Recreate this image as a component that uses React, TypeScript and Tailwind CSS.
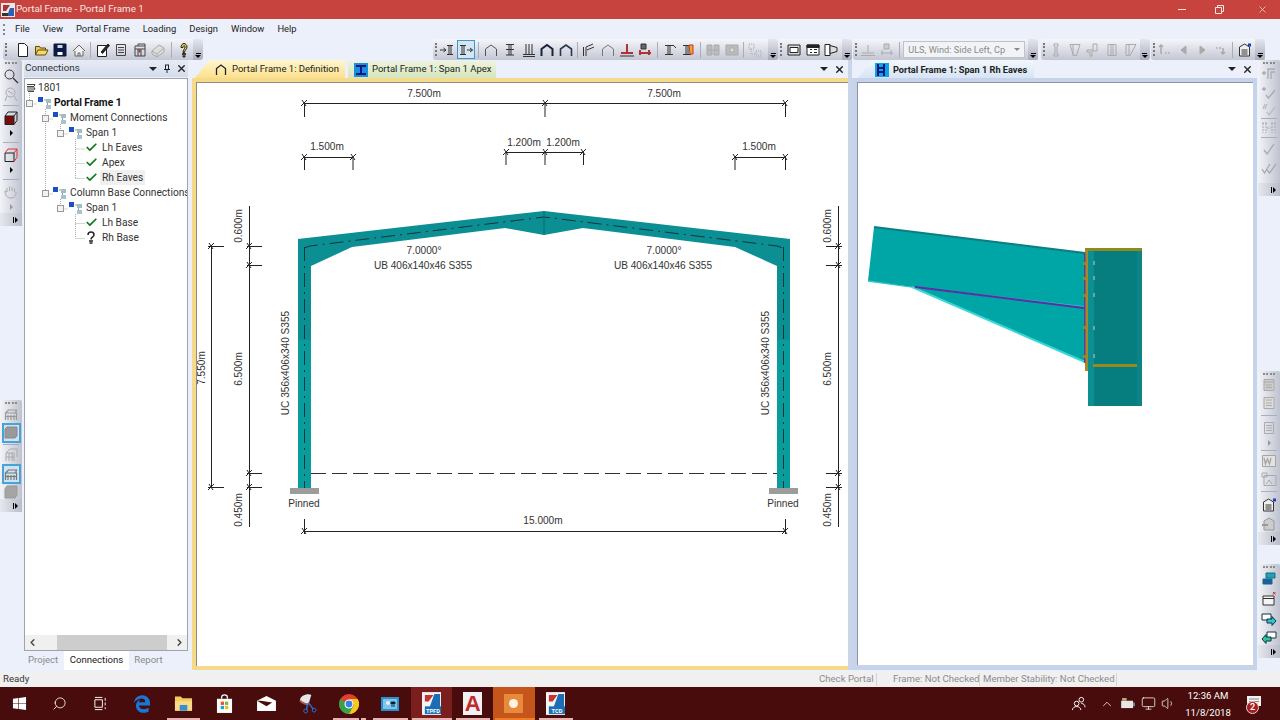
import React from 'react';
import { Check, ChevronLeft, ChevronRight, ChevronUp, Monitor, Search, Volume1, X } from 'lucide-react';
import { FaWindows, FaEdgeLegacy } from 'react-icons/fa';

const I = ({ children, className = 'text-[#333]' }: { children: React.ReactNode; className?: string }) => (
  <svg viewBox="0 0 16 16" fill="none" stroke="currentColor" className={`w-4 h-4 shrink-0 ${className}`}>
    {children}
  </svg>
);

const Grip = () => (
  <div className="w-[2px] h-[13px] shrink-0 border-l-2 border-dotted border-[#777]" />
);
const Sep = ({ className = 'mx-[2px]' }: { className?: string }) => (
  <div className={`w-px h-[16px] bg-[#a9adb9] shrink-0 ${className}`} />
);
const Cell = ({ children, on = false }: { children: React.ReactNode; on?: boolean }) => (
  <div className={`w-[18.6px] h-[19px] shrink-0 flex items-center justify-center ${on ? 'border border-[#3c97cf] bg-[#d5e6f3]' : ''}`}>
    {children}
  </div>
);
const EndCap = () => (
  <div className="w-[10px] h-full ml-auto shrink-0 rounded-r-[3px] bg-gradient-to-b from-[#e4e6ee] to-[#a9adba] flex flex-col items-center justify-end pb-[2px]">
    <div className="w-[5px] h-px bg-black mb-px" />
    <div className="w-0 h-0 border-x-[3px] border-x-transparent border-t-[3px] border-t-black" />
  </div>
);
const Bar = ({ children, className }: { children: React.ReactNode; className: string }) => (
  <div className={`h-[21px] flex items-center shrink-0 pl-[2px] rounded-l-[3px] bg-gradient-to-b from-[#f5f6fb] to-[#c3c7d3] ${className}`}>
    <Grip />
    {children}
    <EndCap />
  </div>
);

const VCell = ({ children, on = false, className = 'h-[19px]' }: { children: React.ReactNode; on?: boolean; className?: string }) => (
  <div className={`w-[19px] shrink-0 flex items-center justify-center ${className} ${on ? 'border-2 border-[#4aa3d8] bg-[#cfe2f0]' : ''}`}>
    {children}
  </div>
);
const VSep = ({ className = 'my-[3px]' }: { className?: string }) => <div className={`w-[16px] h-px shrink-0 bg-[#aaaeba] ${className}`} />;
const VArrow = ({ grey = false }: { grey?: boolean }) => (
  <div className="h-[12px] shrink-0 flex items-center">
    <div className={`w-0 h-0 border-y-[3px] border-y-transparent border-l-[3px] ${grey ? 'border-l-[#999]' : 'border-l-black'}`} />
  </div>
);
const VGrip = () => <div className="w-[12px] h-[3px] mt-[2px] border-t-2 border-dotted border-[#8a8a8a] shrink-0" />;
const VEnd = () => (
  <div className="mt-auto w-full h-[13px] shrink-0 flex items-center justify-end pr-[4px] gap-px bg-gradient-to-r from-[#e6e8ef] to-[#b9bdc9]">
    <div className="w-px h-[6px] bg-black" />
    <div className="w-0 h-0 border-y-[3px] border-y-transparent border-l-[3px] border-l-black" />
  </div>
);
const VBar = ({ children, className }: { children: React.ReactNode; className: string }) => (
  <div className={`w-[22px] flex flex-col items-center shrink-0 rounded-[2px] bg-gradient-to-r from-[#f3f4f9] to-[#bfc3cf] ${className}`}>
    <VGrip />
    {children}
    <VEnd />
  </div>
);

const Arch = ({ w = 1 }: { w?: number }) => <path d="M2.5 14V7l5.5-4 5.5 4v7" strokeWidth={w} />;
const IBeam = () => <path d="M4 3.5h8M4 12.5h8M7 3.5v9M9 3.5v9" />;
const Page = () => <path d="M3.5 1.5h6l3 3v10h-9z" fill="#fff" />;
const Cube = ({ fill, stroke }: { fill: string; stroke: string }) => (
  <>
    <path d="M2 6h9v8.5H2z" fill={fill} stroke="#222" />
    <path d="M2 6l3-4h9v8.5l-3 4M11 6l3-4" stroke={stroke} />
  </>
);
const Lines = () => <path d="M3.5 2.5h9v11h-9zM5 5.5h6M5 8h6M5 10.5h6" />;
const Frame3D = () => (
  <path d="M2.5 14V7h11v7M2.5 7l3-3h8l-1 3M5 14V9M8 14V9M11 14V9M2.5 10.5h11" strokeWidth={1.2} />
);

const TopToolbars = () => (
  <div className="h-[21px] flex shrink-0 pl-[3px]">
    <Bar className="w-[195px]">
      <div className="w-[7px] shrink-0" />
      <Cell><I className="text-[#222]"><Page /></I></Cell>
      <Cell><I className="text-[#5a4a10]"><path d="M1.5 13V4.5h4l1 1.5h5v2" fill="#f0c850" /><path d="M1.5 13l2.5-5h10l-2.5 5z" fill="#f5d870" /></I></Cell>
      <Cell><I className="text-[#0b1a3f]"><path d="M2 2h12v12H2z" fill="#0d1b4a" /><path d="M5 2.5h6v4H5z" fill="#cfd4e0" /><path d="M5 9.5h6v4H5z" fill="#fff" /></I></Cell>
      <Cell><I className="text-[#666]"><path d="M2 9l6-6 6 6M4 9v5h8V9" fill="#f0f0f0" /><path d="M7 14v-3h2v3" /></I></Cell>
      <Sep className="mx-[2px]" />
      <Cell><I className="text-[#222]"><path d="M2.5 3.5h9v11h-9z" fill="#fff" /><path d="M6 10l7-8 1.5 1.5-7 8z" fill="#222" /></I></Cell>
      <Cell><I className="text-[#444]"><Lines /></I></Cell>
      <Cell><I className="text-[#444]"><path d="M3 4h10v10H3zM6 4V2h7v2M3 7h10M6 7v7M9 7v7" /><path d="M6.5 7.5h2v3h-2z" fill="#a33" stroke="none" /></I></Cell>
      <Cell><I className="text-[#aaa]"><path d="M2 9l7-6 5 3v4l-7 5-5-3z" fill="#ddd" /><path d="M2 9l5 3 7-6M7 12v3" /></I></Cell>
      <Sep className="mx-[3px]" />
      <Cell><I className="text-[#222]"><path d="M5 5.5C5 3 6.5 1.5 8 1.5s3 1.5 3 3.5c0 2.5-2.5 3-2.5 5.5H7C7 8 9 7 9 5S7 3.5 7 5.5z" fill="#f2d13c" /><path d="M6.5 11.5h3v1.500h-3zM7 14h2v1H7z" fill="#888" /></I></Cell>
    </Bar>
    <div className="w-[235px] shrink-0" />
    <Bar className="w-[345px]">
      <div className="w-px shrink-0" />
      <Cell><I><path d="M1 8h6M4.500 6l2.500 2-2.500 2" /><path d="M8 3.500h6M8 12.500h6M10 3.500v9M12 3.500v9" /></I></Cell>
      <Cell on><I><path d="M2 3.500h6M2 12.500h6M4 3.500v9M6 3.500v9" /><path d="M9 8h5.500M12 6l2.500 2-2.500 2" /></I></Cell>
      <Sep className="mx-[3px]" />
      <Cell><I className="text-[#555]"><Arch /></I></Cell>
      <Cell><I><path d="M4 2.500h8M4 7.500h8M4 13h8M7 2.500v10.500M9 2.500v10.500" /></I></Cell>
      <Cell><I><path d="M5 2v10M8 2v10M11 2v10M2 12.500h12M2 14.500h12" /></I></Cell>
      <Cell><I className="text-[#1b2238]"><Arch w={2} /></I></Cell>
      <Cell><I className="text-[#2c3550]"><Arch w={1.600} /></I></Cell>
      <Sep className="mx-[2px]" />
      <Cell><I><path d="M2.500 14V5M5 14V5M5 5l7-3M6 8l7-3" /></I></Cell>
      <Cell><I className="text-[#777]"><Arch /></I></Cell>
      <Cell><I className="text-[#b23131]"><path d="M8 2v8M2 11h12" strokeWidth={2} /><path d="M1 14h14" stroke="#333" /></I></Cell>
      <Cell><I className="text-[#333]"><path d="M4 2h5v5H4z" fill="#666" /><path d="M3 8v5M12 8v5M2 11h12" stroke="#b23131" strokeWidth={2} /></I></Cell>
      <Sep className="mx-[2px]" />
      <Cell><I><IBeam /><path d="M12 3l3 3" /></I></Cell>
      <Cell><I><IBeam /><path d="M10 3h4v9h-3z" fill="#e0b020" stroke="#c33" /></I></Cell>
      <Sep className="mx-[3px]" />
      <Cell><I className="text-[#aaa]"><path d="M2 3h5v10H2zM9 3h5v10H9zM2 8h12" fill="#bbb" /></I></Cell>
      <Cell><I className="text-[#aaa]"><path d="M2 3h12v10H2z" fill="#bbb" /><path d="M6 6h4v4H6z" fill="#ddd" /></I></Cell>
      <Sep className="mx-[2px]" />
      <Cell><I className="text-[#aaa]"><path d="M2 2h5v5H2zM9 9h5v5H9zM4 7v5h5" strokeDasharray="1 1" /></I></Cell>
    </Bar>
    <Bar className="w-[74px]">
      <div className="w-[3px] shrink-0" />
      <Cell><I className="text-[#222]"><path d="M2 3h12v10H2z" fill="#ddd" /><path d="M4 5.500h8v5H4z" fill="#fff" /></I></Cell>
      <Cell><I className="text-[#222]"><path d="M2 3h12v10H2z" fill="#fff" /><path d="M2 3h12v2.500H2z" fill="#222" /><path d="M5 7.500h2M9 7.500h3M5 10.500h2M9 10.500h3" /></I></Cell>
      <Cell><I className="text-[#222]"><path d="M2 2.500h5v11H2z" fill="#fff" /><path d="M7 3.500l7 2v4l-7 2z" fill="#ddd" /></I></Cell>
    </Bar>
    <Bar className="w-[185px] ml-px">
      <div className="w-[2px] shrink-0" />
      <Cell><I className="text-[#aaa]"><path d="M8 3v7M2 11h12" /><path d="M1 13.500h14" /></I></Cell>
      <Cell><I className="text-[#aaa]"><path d="M5 2h5v5H5z" fill="#ccc" /><path d="M3 8v5M12 8v5M2 11h12" /></I></Cell>
      <Sep className="mx-[3px]" />
      <div className="w-[122px] h-[17px] shrink-0 bg-[#f2f3f7] border border-[#bfc2cc] flex items-center pl-[4px] text-[#8a8a8a] text-[9.200px] whitespace-nowrap overflow-hidden">
        ULS, Wind: Side Left, Cp
        <div className="ml-auto mr-[4px] w-0 h-0 border-x-[3px] border-x-transparent border-t-[3px] border-t-[#888]" />
      </div>
    </Bar>
    <Bar className="w-[108px] ml-[3px]">
      <div className="w-[2px] shrink-0" />
      <Cell><I className="text-[#aaa]"><path d="M6 2h4v2H9v8h1v2H6v-2h1V4H6z" /></I></Cell>
      <Cell><I className="text-[#aaa]"><path d="M3 2.500h10L9.500 13.500h-3z" /><path d="M6 2.500v11" /></I></Cell>
      <Cell><I className="text-[#aaa]"><path d="M2 8h5v6H5V10H2zM8 2h4v7H8z" /></I></Cell>
      <Cell><I className="text-[#aaa]"><path d="M4 2.500h8v11H4zM7 2.500v11M9 2.500v11" /></I></Cell>
      <Cell><I className="text-[#aaa]"><path d="M3 2.500h10l-6 11H3zM6 2.500v11" /></I></Cell>
    </Bar>
    <Bar className="w-[114px] ml-[2px]">
      <div className="w-px shrink-0" />
      <Cell><I className="text-[#aaa]"><path d="M4 3v9M2 5l2-2 2 2M8 11h1.500M11 11h1.500" strokeWidth={1.500} /></I></Cell>
      <Cell><I className="text-[#aaa]"><path d="M10 4L5 8l5 4z" fill="#aaa" /></I></Cell>
      <Cell><I className="text-[#aaa]"><path d="M6 4l5 4-5 4z" fill="#aaa" /></I></Cell>
      <Cell><I className="text-[#aaa]"><path d="M3 6h1.500M6 6h2M10 6v6M8 10l2 2 2-2" strokeWidth={1.500} /></I></Cell>
      <Sep className="mx-[2px]" />
      <Cell><I className="text-[#333]"><path d="M2.500 5l5-3 5 3v9h-10z" fill="#eee" /><path d="M4.500 8h6M4.500 10h6M4.500 12h6" /><path d="M11 1.500h3v3h-3z" fill="#1b3fb5" stroke="none" /></I></Cell>
    </Bar>
  </div>
);

const LeftTools = () => (
  <div className="w-[22px] flex flex-col shrink-0">
    <VBar className="h-[158px]">
      <VCell className="h-[18px] mt-[2px]"><I className="text-[#333]"><circle cx="6.500" cy="6.500" r="4.500" /><path d="M10 10l5 5" strokeWidth={1.300} /></I></VCell>
      <VCell className="h-[17px]"><I className="text-[#aaa]"><circle cx="7.500" cy="6.500" r="4.500" /><path d="M4 10l-2 5M11 10l3 5M5 5l5 3" /></I></VCell>
      <VSep />
      <VCell className="h-[18px]"><I className="text-[#222]"><Cube fill="#7a0c0c" stroke="#222" /></I></VCell>
      <VArrow />
      <VSep />
      <VCell className="h-[18px]"><I className="text-[#222]"><Cube fill="none" stroke="#d33" /></I></VCell>
      <VArrow />
      <VSep />
      <VCell className="h-[18px]"><I className="text-[#aaa]"><path d="M4 8V4M6.500 7V2.500M9 7V3M11.500 8V4.500M4 8L2 7c0 4 2 7 6 7 3 0 5-2 5-6" /></I></VCell>
      <VArrow grey />
    </VBar>
    <VBar className="h-[112px] mt-[182px]">
      <VCell className="h-[17px]"><I className="text-[#999]"><Frame3D /></I></VCell>
      <VCell on className="h-[20px] mt-px"><I className="text-[#8a8a8a]"><path d="M2 4l2-2h10v9l-2 2H2z" fill="#999" /></I></VCell>
      <VSep className="my-px" />
      <VCell className="h-[18px]"><I className="text-[#aaa]"><path d="M3 14V6l4-4h7v8M3 6h8v8M6 14V6M9 14V6M3 10h8" /></I></VCell>
      <VCell on className="h-[20px]"><I className="text-[#777]"><Frame3D /></I></VCell>
      <VCell className="h-[15px]"><I className="text-[#999]"><path d="M2 5l2-3h10v9l-2 3H2z" fill="#a5a5a5" /></I></VCell>
    </VBar>
  </div>
);

const RightTools = () => (
  <div className="w-[22px] flex flex-col shrink-0 ml-px">
    <VBar className="h-[136px]">
      <VCell className="h-[18px]"><I className="text-[#aaa]"><path d="M1 7h4M3 5v4M7 13V3h7M10 13V6h4" strokeWidth={1.300} /></I></VCell>
      <VCell className="h-[18px]"><I className="text-[#aaa]"><path d="M1 5h4M3 3v4M5 11l2.500 3L14 6" strokeWidth={1.300} /></I></VCell>
      <VCell className="h-[16px]"><I className="text-[#bbb]"><path d="M4 3l-2 5M6 3L4 8M6 11l2 3 6-8" strokeWidth={1.300} /></I></VCell>
      <VSep className="my-px" />
      <VCell className="h-[16px]"><I className="text-[#aaa]"><path d="M1 3h5M2 3v10M5 3v10M10 3h5M11 3v10M14 3v10M6 8h4" strokeDasharray="2 1" /></I></VCell>
      <VSep className="my-px" />
      <VCell className="h-[19px]"><I className="text-[#aaa]"><path d="M3 9l3 4 7-10" strokeWidth={1.300} /></I></VCell>
      <VCell className="h-[20px]"><I className="text-[#aaa]"><path d="M1 9l2.500 4L9 4M6 10l2.500 3L15 4" strokeWidth={1.300} /></I></VCell>
    </VBar>
    <VBar className="h-[174px] mt-[175px]">
      <VCell className="h-[18px]"><I className="text-[#aaa]"><path d="M3 2.500h10v11H3z" fill="#ccc" /><path d="M3 5h10M5 8h6M5 10.500h6" /></I></VCell>
      <VCell className="h-[18px]"><I className="text-[#aaa]"><path d="M3 2.500h10v11H3zM5 5h6M5 8h6M5 10.500h6" fill="#ddd" /></I></VCell>
      <VSep />
      <VCell className="h-[18px]"><I className="text-[#aaa]"><Lines /></I></VCell>
      <VArrow grey />
      <VSep className="my-px" />
      <VCell className="h-[18px]"><I className="text-[#a5a5a5]"><path d="M1.500 2.500h13v11h-13z" fill="#e2e2e2" /><path d="M3 5l1.500 6L6.500 6l2 5L10 5" strokeWidth={1.300} /></I></VCell>
      <VCell className="h-[18px]"><I className="text-[#aaa]"><path d="M3 4.500h12v10H3zM1 2h5v4H1zM5 13l3-4 3 4" /></I></VCell>
      <VSep />
      <VCell className="h-[20px]"><I className="text-[#333]"><path d="M2.500 5l5-3 5 3v9h-10z" fill="#eee" /><path d="M4.500 8h6M4.500 10h6M4.500 12h6" /><path d="M12 1.500h3v3h-3z" fill="#1b3fb5" stroke="none" /></I></VCell>
      <VCell className="h-[17px]"><I className="text-[#999]"><path d="M3 5l5-3 5 3v9H3z" fill="#ccc" /><path d="M1 9h6" strokeWidth={2} /></I></VCell>
    </VBar>
    <VBar className="h-[94px] mt-[19px]">
      <VCell className="h-[20px]"><I className="text-[#0f6f80]"><path d="M5 2h9v5H5z" fill="#27a0b5" /><path d="M2 8h9v5H2z" fill="#1b5ea8" /></I></VCell>
      <VCell className="h-[19px]"><I className="text-[#333]"><path d="M2 5h11v9H2zM2 7.500h11" fill="#f4f4f4" /><path d="M12 1l2.500 2.500M14.500 1L12 3.500" stroke="#c22" /></I></VCell>
      <VCell className="h-[21px]"><I className="text-[#134]"><path d="M1 3h9v6H1z" fill="#fff" /><path d="M6 8h5V5.500L15 10l-4 4.500V12H6z" fill="#2ec4d0" /></I></VCell>
      <VCell className="h-[16px]"><I className="text-[#134]"><path d="M6 3h9v6H6z" fill="#fff" /><path d="M10 8H5V5.500L1 10l4 4.500V12h5z" fill="#2ec4a0" /></I></VCell>
    </VBar>
  </div>
);

const TreeIcon = () => (
  <svg viewBox="0 0 14 12" className="w-[14px] h-[12px] shrink-0">
    <rect x="0" y="0" width="5" height="5" fill="#1d4fc4" />
    <rect x="8" y="2" width="5" height="4" fill="#9fc0c0" />
    <rect x="8" y="8" width="5" height="4" fill="#a8c0d0" />
    <path d="M6 3h2M9.500 6v2" stroke="#999" strokeWidth="1" />
  </svg>
);

const Row = ({ pl, icon, children, className = '' }: { pl: string; icon: React.ReactNode; children: React.ReactNode; className?: string }) => (
  <div className={`h-[15px] flex items-center whitespace-nowrap ${pl} ${className}`}>
    {icon}
    {children}
  </div>
);

const Ok = () => <Check className="w-[13px] h-[13px] shrink-0 text-[#0d7a1c] mr-[4px]" strokeWidth={3.200} />;

const ConnectionsPanel = () => (
  <div className="w-[166px] shrink-0 flex flex-col text-[#333]">
    <div className="h-[17px] ml-[2px] flex items-center pl-[1px] text-[9.800px] bg-gradient-to-b from-[#e6ebf6] to-[#d4dceb] shrink-0">
      Connections
      <div className="ml-auto w-0 h-0 border-x-[4px] border-x-transparent border-t-[4px] border-t-[#222]" />
      <svg viewBox="0 0 8 10" className="w-[8px] h-[10px] ml-[6px] text-[#222]" fill="none" stroke="currentColor"><path d="M2 1h4M2.500 1v4M5.500 1v4M1 5.500h6M4 5.500V9" /></svg>
      <X className="w-[11px] h-[11px] ml-[5px] mr-[1px] text-[#222]" strokeWidth={3} />
    </div>
    <div className="ml-[2px] mt-px h-[573px] bg-white border border-[#9ea3ae] relative overflow-hidden text-[10.200px]">
      <svg className="absolute left-0 top-0 w-[160px] h-[170px]" viewBox="24 78 160 170" fill="none" stroke="#aaa" strokeDasharray="1 1">
        <path d="M28.500 92V103M44.500 108V193M44.500 118H52M59.500 123V133M59.500 133H67M59.500 208H67M44.500 193H52M74.500 138V177M74.500 148H84M74.500 162.500H84M74.500 177.500H84M59.500 198V208M74.500 213V237M74.500 222.500H84M74.500 237.500H84M28.500 103H36" />
        <g stroke="#999" strokeDasharray="none" fill="#f2f2f2">
          <rect x="25.500" y="99.500" width="6" height="6" />
          <rect x="41.500" y="114.500" width="6" height="6" />
          <rect x="56.500" y="129.500" width="6" height="6" />
          <rect x="41.500" y="189.500" width="6" height="6" />
          <rect x="56.500" y="204.500" width="6" height="6" />
        </g>
      </svg>
      <div className="relative pt-[1px]">
        <Row pl="pl-[1px]" icon={<svg viewBox="0 0 10 10" className="w-[10px] h-[10px] mr-[2px] text-[#444]" fill="none" stroke="currentColor"><path d="M1 1.500h8l-1 2H1M1 5h8L8 7H1M2 8.500h6" /></svg>}>1801</Row>
        <Row pl="pl-[13px]" icon={<div className="mr-[2px]"><TreeIcon /></div>} className="font-bold text-[#111]">Portal Frame 1</Row>
        <Row pl="pl-[28px]" icon={<div className="mr-[3px]"><TreeIcon /></div>}>Moment Connections</Row>
        <Row pl="pl-[44px]" icon={<div className="mr-[3px]"><TreeIcon /></div>}>Span 1</Row>
        <Row pl="pl-[60px]" icon={<Ok />}>Lh Eaves</Row>
        <Row pl="pl-[60px]" icon={<Ok />}>Apex</Row>
        <Row pl="pl-[60px]" icon={<Ok />}><span className="bg-[#f0f0f0] -ml-[2px] px-[2px]">Rh Eaves</span></Row>
        <Row pl="pl-[28px]" icon={<div className="mr-[3px]"><TreeIcon /></div>}>Column Base Connections</Row>
        <Row pl="pl-[44px]" icon={<div className="mr-[3px]"><TreeIcon /></div>}>Span 1</Row>
        <Row pl="pl-[60px]" icon={<Ok />}>Lh Base</Row>
        <Row pl="pl-[60px]" icon={<svg viewBox="0 0 10 13" className="w-[10px] h-[13px] ml-px mr-[6px] text-[#222]" fill="none" stroke="currentColor" strokeWidth="1.500"><path d="M2 4c0-4 6-4 6 0 0 2-3 2-3 4.500" /><path d="M3 10h4M3.500 12h3" /></svg>}>Rh Base</Row>
      </div>
      <div className="absolute bottom-0 left-0 right-0 h-[15px] flex items-center justify-between bg-[#f0f0f0]">
        <ChevronLeft className="w-[11px] h-[11px] ml-[2px] text-[#444]" strokeWidth={3} />
        <div className="absolute left-[32px] w-[110px] h-full bg-[#cdcdcd]" />
        <ChevronRight className="w-[11px] h-[11px] mr-[2px] text-[#444]" strokeWidth={3} />
      </div>
    </div>
    <div className="h-[19px] ml-[6px] flex items-start text-[#8a8a8a] text-[9.600px] shrink-0">
      <div className="w-[36px] h-[18px] flex items-center">Project</div>
      <div className="w-[65px] h-[19px] flex items-center justify-center bg-white text-[#222]">Connections</div>
      <div className="w-[39px] h-[18px] flex items-center justify-center">Report</div>
    </div>
  </div>
);

const Tick = ({ x, y }: { x: number; y: number }) => <path d={`M${x - 3} ${y + 3}L${x + 3} ${y - 3}M${x - 2} ${y - 3}L${x + 2} ${y + 3}`} />;

const Definition = () => (
  <svg viewBox="197 83 650 583" className="w-[650px] h-[583px] block text-[10.100px] [font-family:'Liberation_Sans',sans-serif]">
    <path
      d="M298 239L544 211L790 239V488H777V266L735 247L583 228L544 235L505 228L352 247L311 266V488H298Z"
      fill="#0b8f92"
    />
    <path d="M298 340H311V488H298ZM777 340H790V488H777Z" fill="#0a9b9d" />
    <g fill="none" stroke="#10353f">
      <path d="M304.500 247V488M783.500 247V488M304 248L310 246L544 217L777 246L783 248" strokeDasharray="14 5 2 5" />
      <path d="M544 211V235" stroke="#0a6a70" />
    </g>
    <path d="M311 473.500H777" stroke="#333" strokeDasharray="15 6" fill="none" />
    <path d="M290 488h29v6h-29zM769 488h29v6h-29z" fill="#9c9c9c" />
    <g stroke="#222" fill="none">
      <path d="M304.500 103.500H785.500M304.500 103.500V117M545 103.500V117M785.500 103.500V117" />
      <path d="M304.500 157.500H353M304.500 157.500V170M353 157.500V170M735 157.500H785.500M735 157.500V170M785.500 157.500V170" />
      <path d="M506 152.500H583.500M506 152.500V165M545 152.500V165M583.500 152.500V165" />
      <path d="M304.500 531.500H785.500M304.500 519V534M785.500 519V534" />
      <path d="M211.500 246V487M208 246.500H224M208 487.500H224" />
      <path d="M249.500 206V527M247 246.500H262M247 265.500H262M247 473.500H262M247 487.500H262" />
      <path d="M838.500 206V527M826 246.500H842M826 265.500H842M826 473.500H842M826 487.500H842" />
      <Tick x={304} y={103} /><Tick x={545} y={103} /><Tick x={785} y={103} />
      <Tick x={304} y={157} /><Tick x={353} y={157} /><Tick x={735} y={157} /><Tick x={785} y={157} />
      <Tick x={506} y={152} /><Tick x={545} y={152} /><Tick x={583} y={152} />
      <Tick x={304} y={531} /><Tick x={785} y={531} />
      <Tick x={211} y={246} /><Tick x={211} y={487} />
      <Tick x={249} y={246} /><Tick x={249} y={265} /><Tick x={249} y={473} /><Tick x={249} y={487} />
      <Tick x={838} y={246} /><Tick x={838} y={265} /><Tick x={838} y={473} /><Tick x={838} y={487} />
    </g>
    <g fill="#333" textAnchor="middle">
      <text x="424" y="97">7.500m</text>
      <text x="664" y="97">7.500m</text>
      <text x="327" y="150">1.500m</text>
      <text x="759" y="150">1.500m</text>
      <text x="524" y="146">1.200m</text>
      <text x="563" y="146">1.200m</text>
      <text x="424" y="254">7.0000°</text>
      <text x="664" y="254">7.0000°</text>
      <text x="423" y="269">UB 406x140x46 S355</text>
      <text x="663" y="269">UB 406x140x46 S355</text>
      <text x="304" y="507">Pinned</text>
      <text x="783" y="507">Pinned</text>
      <text x="543" y="524">15.000m</text>
      <text transform="translate(205 368) rotate(-90)">7.550m</text>
      <text transform="translate(242 226) rotate(-90)">0.600m</text>
      <text transform="translate(242 369) rotate(-90)">6.500m</text>
      <text transform="translate(242 510) rotate(-90)">0.450m</text>
      <text transform="translate(831 226) rotate(-90)">0.600m</text>
      <text transform="translate(831 369) rotate(-90)">6.500m</text>
      <text transform="translate(831 510) rotate(-90)">0.450m</text>
      <text transform="translate(289 363) rotate(-90)">UC 356x406x340 S355</text>
      <text transform="translate(769 363) rotate(-90)">UC 356x406x340 S355</text>
    </g>
  </svg>
);

const EavesDetail = () => (
  <svg viewBox="858 83 395 582" className="w-[395px] h-[582px] block">
    <path d="M874 227L1085 253V307L912 287L868 281Z" fill="#00a5a6" />
    <path d="M913 287L1085 307V362Z" fill="#00a5a6" />
    <path d="M874 227L1085 253" stroke="#0c7d82" strokeWidth="2" />
    <path d="M868 281L912 287L1085 307" stroke="#2cc6c6" strokeWidth="1.500" />
    <path d="M912 287L1085 362" stroke="#3ad6d6" strokeWidth="2" />
    <path d="M915 287L1084 308" stroke="#5a2ea6" strokeWidth="2" />
    <rect x="1088" y="249" width="54" height="157" fill="#067d7e" />
    <rect x="1088" y="249" width="6" height="157" fill="#0c8f90" />
    <rect x="1137" y="249" width="5" height="157" fill="#0c8486" />
    <rect x="1085" y="248" width="57" height="3" fill="#8f8a1f" />
    <rect x="1085" y="250" width="3" height="121" fill="#a08a2a" />
    <rect x="1084" y="253" width="1.500" height="110" fill="#6a3a9a" />
    <rect x="1093" y="364" width="44" height="3" fill="#958a20" />
    <g fill="#8f8a1f">
      <rect x="1083" y="262" width="3" height="3" />
      <rect x="1083" y="277" width="3" height="3" />
      <rect x="1083" y="294" width="3" height="3" />
      <rect x="1083" y="326" width="3" height="3" />
      <rect x="1083" y="355" width="3" height="3" />
    </g>
    <g fill="#6fa3a8">
      <rect x="1093" y="261" width="2" height="4" />
      <rect x="1093" y="276" width="2" height="4" />
      <rect x="1093" y="293" width="2" height="4" />
      <rect x="1093" y="326" width="2" height="4" />
      <rect x="1093" y="354" width="2" height="4" />
    </g>
  </svg>
);

const DocTabsIcons = () => (
  <div className="ml-auto flex items-center mr-[3px]">
    <div className="w-0 h-0 border-x-[4px] border-x-transparent border-t-[4px] border-t-[#222]" />
    <X className="w-[11px] h-[11px] ml-[6px] text-[#222]" strokeWidth={3} />
  </div>
);

const MiddleDocs = () => (
  <>
    <div className="w-[656px] ml-[4px] shrink-0 flex flex-col">
      <div className="h-[18px] flex items-end shrink-0 pl-[3px] text-[#222] text-[9.500px]">
        <div className="w-[150px] h-[18px] pt-px flex items-center pl-[18px] whitespace-nowrap bg-gradient-to-b from-[#fff6cf] to-[#fbe08c] rounded-t-[3px] [clip-path:polygon(14px_0,100%_0,100%_100%,0_100%)]">
          <I className="text-[#222] mr-[3px]"><path d="M3.500 13V6.500L8 3l4.500 3.500V13" strokeWidth={1.300} /></I>
          Portal Frame 1: Definition
        </div>
        <div className="w-[148px] h-[17px] ml-[3px] flex items-center pl-[6px] bg-gradient-to-b from-[#eef3dc] to-[#d5e6bd] rounded-t-[3px] whitespace-nowrap">
          <svg viewBox="0 0 14 14" className="w-[14px] h-[14px] mr-[4px] shrink-0"><rect width="14" height="14" fill="#1a8fe0" /><path d="M2 3h10M2 11h10M7 3v8" stroke="#0a1a7a" strokeWidth="2" /></svg>
          Portal Frame 1: Span 1 Apex
        </div>
        <div className="flex-1 h-full flex items-center"><DocTabsIcons /></div>
      </div>
      <div className="pl-[4px] pt-[4px] bg-[#f5da8c] shrink-0 pb-[4px]">
        <div className="bg-white border-l border-t border-[#8d8d80]"><Definition /></div>
      </div>
    </div>
    <div className="w-[4px] shrink-0 bg-[#cbd5ea] h-[610px]" />
    <div className="w-[405px] shrink-0 flex flex-col">
      <div className="h-[18px] flex items-end shrink-0 pl-[6px] font-bold text-[9.200px] text-[#222]">
        <div className="w-[176px] h-[18px] pt-px flex items-center pl-[16px] bg-gradient-to-b from-[#f2f7fd] to-[#d6e4f4] [clip-path:polygon(14px_0,100%_0,100%_100%,0_100%)] whitespace-nowrap">
          <svg viewBox="0 0 14 14" className="w-[14px] h-[14px] ml-px mr-[4px] shrink-0"><rect width="14" height="14" fill="#10a0e8" /><path d="M3 1v12M9 1v12M3 5h6M3 9h6" stroke="#0a1a7a" strokeWidth="2" /></svg>
          Portal Frame 1: Span 1 Rh Eaves
        </div>
        <div className="flex-1 h-full flex items-center pr-px"><DocTabsIcons /></div>
      </div>
      <div className="pl-[5px] pr-[4px] pt-[4px] pb-[5px] bg-[#c7d3ea] shrink-0">
        <div className="bg-white border-l border-t border-[#8d93a3]"><EavesDetail /></div>
      </div>
    </div>
  </>
);

const StatusBar = () => (
  <div className="h-[15px] shrink-0 bg-[#f0f0f0] flex items-center text-[#8c8c8c] text-[9.600px] whitespace-nowrap">
    <span className="w-[819px] pl-[3px] text-[#333]">Ready</span>
    <span className="w-[57px]">Check Portal</span>
    <div className="w-px h-[13px] bg-[#d4d4d4]" />
    <span className="ml-[16px] w-[86px]">Frame: Not Checked</span>
    <div className="w-px h-[13px] bg-[#d4d4d4]" />
    <span className="ml-[3px] w-[133px]">Member Stability: Not Checked</span>
    <div className="w-px h-[13px] bg-[#d4d4d4]" />
  </div>
);

const Slot = ({ children, className = '', w = 'w-[41.3px]' }: { children: React.ReactNode; className?: string; w?: string }) => (
  <div className={`${w} h-full flex items-center justify-center shrink-0 ${className}`}>{children}</div>
);
const Under = ({ className }: { className: string }) => <div className={`absolute left-0 bottom-0 h-[2px] ${className}`} />;
const AppTile = ({ label }: { label: string }) => (
  <svg viewBox="0 0 20 24" className="w-[19px] h-[23px]">
    <rect width="20" height="24" fill="#f4f4f4" />
    <path d="M3 3h9l-5 7H3z" fill="#c8332e" />
    <path d="M13 2h6v14H8z" fill="#1b6db5" />
    <rect x="3" y="15" width="17" height="8" fill="#1b6db5" />
    <text x="11.500" y="22" textAnchor="middle" fill="#fff" className="text-[6px] font-bold">{label}</text>
  </svg>
);

const Taskbar = () => (
  <div className="h-[33px] shrink-0 bg-[#470c0b] flex items-center text-white relative">
    <Slot w="w-[39px]"><FaWindows className="w-[15px] h-[15px] text-white" /></Slot>
    <Slot><Search className="w-[15px] h-[15px] -scale-x-100" strokeWidth={1.300} /></Slot>
    <Slot>
      <svg viewBox="0 0 16 16" className="w-[15px] h-[15px]" fill="none" stroke="currentColor"><path d="M2 4h8v8H2zM2 1.500h8M2 14.500h8M13 2v3M13 7v3M13 12v2" /></svg>
    </Slot>
    <Slot><FaEdgeLegacy className="w-[18px] h-[18px] text-[#1877d6]" /></Slot>
    <Slot>
      <svg viewBox="0 0 20 18" className="w-[19px] h-[18px]"><path d="M1 1h6l2 2h10v13H1z" fill="#f4c95d" /><path d="M1 6h18v10H1z" fill="#f8dc8a" /><path d="M6 10h8v6H6z" fill="#3b8fd0" /></svg>
    </Slot>
    <Slot>
      <svg viewBox="0 0 18 20" className="w-[17px] h-[19px]"><path d="M1 5h16v15H1z" fill="#fff" /><path d="M6 5V3c0-3 6-3 6 0v2" fill="none" stroke="#fff" strokeWidth="1.300" /><rect x="5" y="8" width="3.500" height="3.500" fill="#e8542a" /><rect x="9.500" y="8" width="3.500" height="3.500" fill="#7cba3c" /><rect x="5" y="12.500" width="3.500" height="3.500" fill="#1aa0e8" /><rect x="9.500" y="12.500" width="3.500" height="3.500" fill="#f6b81c" /></svg>
    </Slot>
    <Slot>
      <svg viewBox="0 0 22 18" className="w-[21px] h-[17px]"><path d="M1 6L11 1l10 5v11H1z" fill="#fff" /><path d="M1 6l10 6 6-4-12-2" fill="#470c0b" /></svg>
    </Slot>
    <Slot>
      <svg viewBox="0 0 20 22" className="w-[19px] h-[21px]"><path d="M2 8c0-6 9-8 12-6l-3 10z" fill="#e6e6e6" /><path d="M2 8c3 3 6 4 9 4" stroke="#b4534c" strokeWidth="2" fill="none" /><path d="M11 10l5 7M10 11l-1 7" stroke="#2c6fd0" strokeWidth="1.500" /><circle cx="8" cy="19" r="2" fill="none" stroke="#2c6fd0" /><circle cx="17" cy="18" r="2" fill="none" stroke="#2c6fd0" /></svg>
    </Slot>
    <Slot>
      <svg viewBox="0 0 20 20" className="w-[20px] h-[20px]">
        <circle cx="10" cy="10" r="10" fill="#e04030" />
        <path d="M10 10L1.400 5A10 10 0 0 0 10 20l5-8z" fill="#3aa04a" />
        <path d="M10 5h8.700A10 10 0 0 1 10 20l5-9z" fill="#f8c81c" />
        <circle cx="10" cy="10" r="4.500" fill="#fff" />
        <circle cx="10" cy="10" r="3.400" fill="#3a80e8" />
      </svg>
    </Slot>
    <Slot>
      <svg viewBox="0 0 18 14" className="w-[18px] h-[14px]"><rect width="18" height="14" fill="#2b8fd0" /><rect x="2" y="2" width="14" height="10" fill="#7cc4ea" /><circle cx="7" cy="6" r="2" fill="#e8eef4" /><path d="M10 5h4v2h-4zM10 9h4" stroke="#135" strokeWidth="1" /></svg>
    </Slot>
    <Slot className="bg-[#7a1f1d]"><AppTile label="TPFD" /></Slot>
    <Slot>
      <div className="w-[19px] h-[23px] bg-[#f2f2f2] flex items-center justify-center text-[#c22a2e] text-[22px] leading-none font-bold [font-family:'Liberation_Sans',sans-serif]">A</div>
    </Slot>
    <Slot className="bg-[#c4561b]">
      <div className="w-[19px] h-[19px] bg-[#e88a3c] flex items-center justify-center">
        <div className="w-[9px] h-[9px] rounded-full bg-[#fff3e0]" />
      </div>
    </Slot>
    <Slot><AppTile label="TCD" /></Slot>

    <Under className="ml-[167px] w-[33px] bg-[#e6b2b2]" />
    <Under className="ml-[333px] w-[26px] bg-[#e6b2b2]" />
    <Under className="ml-[361px] w-[5px] bg-[#e6b2b2]" />
    <Under className="ml-[373px] w-[35px] bg-[#e6b2b2]" />
    <Under className="ml-[412px] w-[40px] bg-[#e6b2b2]" />
    <Under className="ml-[456px] w-[34px] bg-[#e6b2b2]" />
    <Under className="ml-[495px] w-[40px] bg-[#f07c28]" />
    <Under className="ml-[539px] w-[34px] bg-[#e6b2b2]" />

    <div className="ml-auto flex items-center h-full">
      <svg viewBox="0 0 16 16" className="w-[15px] h-[15px] mr-[14px]" fill="none" stroke="currentColor"><circle cx="6" cy="8" r="2.500" /><path d="M1.500 15c0-5 9-5 9 0" /><circle cx="11" cy="4" r="2.500" /><path d="M11 8c2 0 4 1 4 4" /></svg>
      <ChevronUp className="w-[14px] h-[14px] mr-[7px]" strokeWidth={1.300} />
      <svg viewBox="0 0 16 12" className="w-[15px] h-[11px] mr-[5px]"><rect y="3" width="13" height="8" fill="#e6e6e6" /><rect x="1" y="0" width="5" height="3" fill="#bba57a" /><rect x="13" y="5" width="2" height="4" fill="#888" /></svg>
      <Monitor className="w-[15px] h-[15px] mr-[5px]" strokeWidth={1.200} />
      <Volume1 className="w-[15px] h-[15px] mr-[10px]" strokeWidth={1.200} />
      <div className="w-[44px] flex flex-col items-center text-[9.600px] leading-[17px] whitespace-nowrap">
        <span>12:36 AM</span>
        <span>11/8/2018</span>
      </div>
      <div className="w-[50px] h-full relative flex items-center justify-center">
        <svg viewBox="0 0 14 14" className="w-[14px] h-[14px] -mt-[2px] -ml-[2px]"><path d="M0 0h14v10H8l-3 3v-3H0z" fill="#f2f2f2" /><path d="M2 3h10M2 5.500h10M2 8h7" stroke="#888" strokeWidth="1" /></svg>
        <div className="absolute left-[16px] top-[14px] w-[13px] h-[13px] rounded-full bg-[#a81d1d] border border-[#e8d0d0] flex items-center justify-center text-[9px] font-semibold leading-none">2</div>
      </div>
    </div>
  </div>
);

export default function App() {
  const menus = ['File', 'View', 'Portal Frame', 'Loading', 'Design', 'Window', 'Help'];
  return (
    <div className="w-[1280px] h-[720px] overflow-hidden flex flex-col bg-[#ecf0fb] text-[#333] text-[10.500px] [font-family:Roboto,sans-serif]">
      {/* Title bar */}
      <div className="h-[19px] shrink-0 bg-[#c7433d] flex items-center text-[#f6e6e4] text-[9.800px] relative">
        <svg viewBox="0 0 14 14" className="w-[14px] h-[14px] ml-px mr-px shrink-0"><rect width="14" height="14" fill="#e9e9ef" /><path d="M2 2h7L5 8H2z" fill="#b5302c" /><path d="M9 5h4v8H6z" fill="#2a63b0" /><path d="M1 10h6v3H1z" fill="#333" /></svg>
        Portal Frame - Portal Frame 1
        <div className="ml-auto flex items-center">
          <div className="w-[8px] h-px bg-current mr-[29px]" />
          <svg viewBox="0 0 9 9" className="w-[9px] h-[9px] mr-[33px]" fill="none" stroke="currentColor"><path d="M.5 2.500h6v6h-6zM2.500 2.500v-2h6v6h-2" /></svg>
          <X className="w-[11px] h-[11px] mr-[12px]" strokeWidth={1.500} />
        </div>
      </div>
      {/* Menu */}
      <div className="h-[20px] shrink-0 flex items-center pl-[3px]">
        <div className="w-[2px] h-[11px] border-l-2 border-dotted border-[#888] mr-[10px]" />
        <div className="flex items-center gap-[13px] text-[#222] text-[9.400px]">
          {menus.map((m) => (
            <span key={m}>{m}</span>
          ))}
        </div>
      </div>
      <TopToolbars />
      {/* Workspace */}
      <div className="h-[612px] shrink-0 flex">
        <LeftTools />
        <ConnectionsPanel />
        <MiddleDocs />
        <RightTools />
      </div>
      <StatusBar />
      <Taskbar />
    </div>
  );
}
